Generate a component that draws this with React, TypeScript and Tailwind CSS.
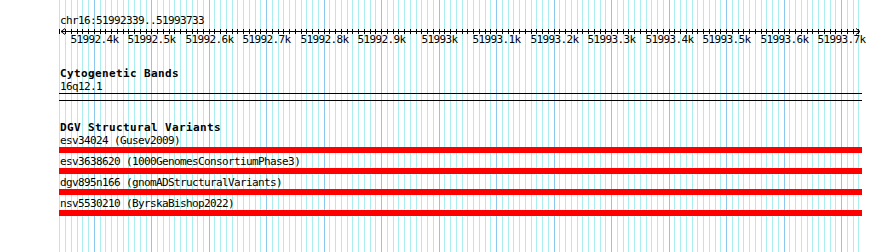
const START = 51992339;
const SCALE = 0.5749;

const variants = [
  { id: "esv34024", study: "Gusev2009" },
  { id: "esv3638620", study: "1000GenomesConsortiumPhase3" },
  { id: "dgv895n166", study: "gnomADStructuralVariants" },
  { id: "nsv5530210", study: "ByrskaBishop2022" },
];

// px offset inside the track column (column starts at page x=59)
function bpX(bp: number): number {
  return Math.floor(0.2 + (bp - START) * SCALE);
}

function tickLabel(bp: number): string {
  const k = Math.floor(bp / 1000);
  const rest = (bp % 1000) / 100;
  return rest ? `${k}.${rest}k` : `${k}k`;
}

const minor: number[] = [];
for (let bp = 51992340; bp <= 51993730; bp += 10) minor.push(bp);
const major = minor.filter((bp) => bp % 100 === 0);

function GridLines() {
  return (
    <svg className="absolute left-0 top-0" width={803} height={252}>
      {minor.map((bp) => (
        <rect
          key={bp}
          x={bpX(bp)}
          y={0}
          width={1}
          height={252}
          fill={bp % 100 === 0 ? "#8cc8ee" : "#aaeef0"}
        />
      ))}
    </svg>
  );
}

function Ruler() {
  return (
    <svg width={803} height={20} className="block overflow-visible">
      {/* axis */}
      <rect x={2} y={5} width={799} height={1} fill="#000" />
      <path d="M2 5.5 L6 2.5 M2 5.5 L6 8.5" stroke="#000" strokeWidth={1} fill="none" />
      <path d="M801 5.5 L797 2.5 M801 5.5 L797 8.5" stroke="#000" strokeWidth={1} fill="none" />
      {minor.map((bp) => (
        <rect key={bp} x={bpX(bp)} y={3} width={1} height={5} fill="#000" />
      ))}
      {major.map((bp) => (
        <text
          key={bp}
          x={bpX(bp) + 0.5}
          y={17}
          textAnchor="middle"
          fontSize={11}
          letterSpacing={-0.62}
          fill="#000"
        >
          {tickLabel(bp)}
        </text>
      ))}
    </svg>
  );
}

export default function App() {
  return (
    <div className="h-[252px] w-[890px] overflow-hidden bg-white pl-[59px] font-['DejaVu_Sans_Mono',monospace] text-[11px] leading-[10px] tracking-[-0.62px] text-black">
      <div className="relative h-[252px] w-[803px]">
        <GridLines />
        <div className="relative flex flex-col pt-[16px]">
          <div className="h-[10px] pl-px">chr16:51992339..51993733</div>
          <Ruler />

          {/* cytobands */}
          <div className="mt-[23px] h-[10px] pl-px font-bold tracking-[0.38px]">
            Cytogenetic Bands
          </div>
          <div className="mt-[3px] h-[10px] pl-px">16q12.1</div>
          <div className="mt-px h-[8px] border-y border-black" />

          {/* dgv */}
          <div className="mt-[22px] h-[10px] pl-px font-bold tracking-[0.38px]">
            DGV Structural Variants
          </div>
          <div className="mt-[3px] flex flex-col gap-[4px]">
            {variants.map((v) => (
              <div key={v.id} className="flex flex-col gap-px">
                <div className="h-[10px] pl-px">
                  {v.id} ({v.study})
                </div>
                <div className="h-[6px] bg-[#ff0000]" />
              </div>
            ))}
          </div>
        </div>
      </div>
    </div>
  );
}
